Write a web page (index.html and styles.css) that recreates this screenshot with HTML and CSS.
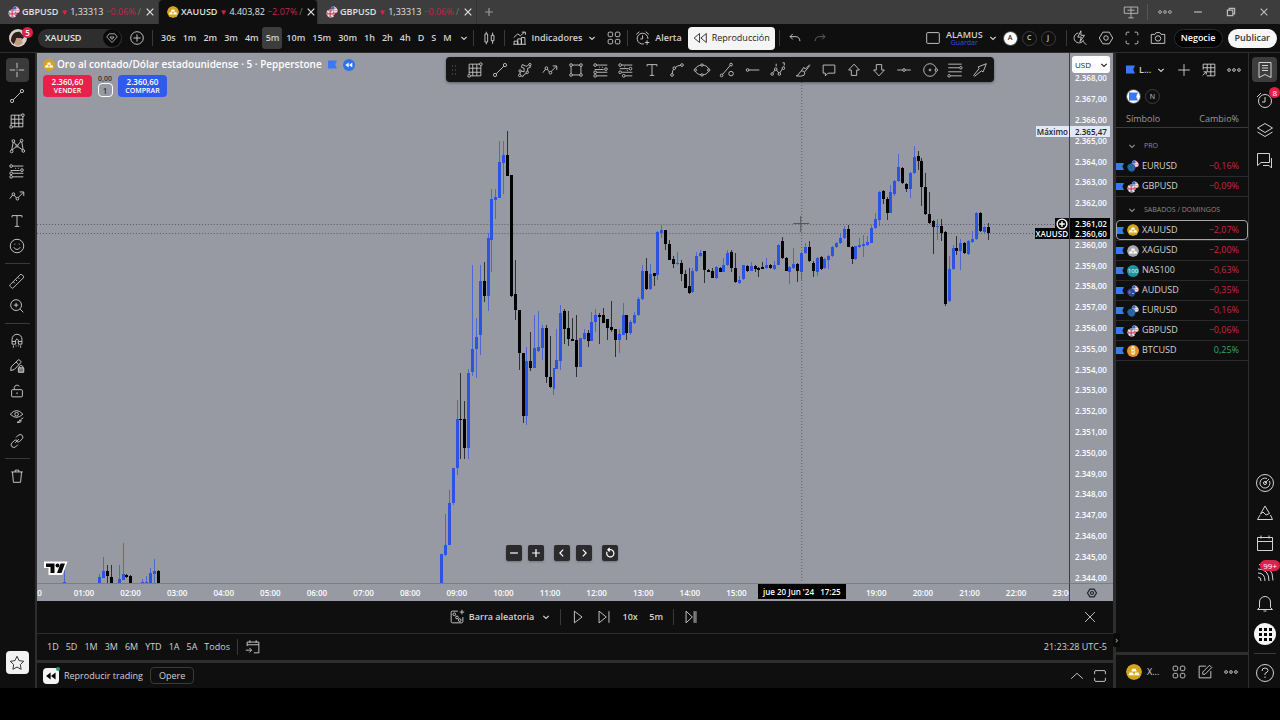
FILE: index.html
```html
<!DOCTYPE html>
<html lang="es">
<head>
<meta charset="utf-8">
<meta name="viewport" content="width=device-width, initial-scale=1">
<title>XAUUSD 4.403,82 −2.07%</title>
<link rel="stylesheet" href="styles.css">
</head>
<body>
<svg class="defs" aria-hidden="true">
  <symbol id="cross" viewBox="0 0 20 20"><path d="M10 2v6M10 12v6M2 10h6M12 10h6M10 9.500v1"/></symbol>
  <symbol id="line" viewBox="0 0 20 20"><circle cx="4.500" cy="15.500" r="1.800"/><circle cx="15.500" cy="4.500" r="1.800"/><path d="M5.800 14.200 14.200 5.800"/></symbol>
  <symbol id="gann" viewBox="0 0 20 20"><path d="M3.500 3.500h13v13h-13zM3.500 8h13M3.500 12.500h13M7.500 3.500v13M12 3.500v13"/><circle class="dot" cx="3.500" cy="16.500" r="1.500"/><circle class="dot" cx="16.500" cy="3.500" r="1.500"/></symbol>
  <symbol id="xabcd" viewBox="0 0 20 20"><path d="M4 15 6 5l4 5 5-6 2 11-7-5-6 5"/><circle class="dot" cx="4" cy="16" r="1.500"/><circle class="dot" cx="6" cy="4.500" r="1.500"/><circle class="dot" cx="15" cy="4" r="1.500"/><circle class="dot" cx="17" cy="15.500" r="1.500"/><circle class="dot" cx="10" cy="10" r="1.200"/></symbol>
  <symbol id="fib" viewBox="0 0 20 20"><path d="M5 4.500h12M3 9.500h10M5 12.500h12M5 16.500h12M8 7l1 0M11 7l1 0"/><circle class="dot" cx="3.500" cy="4.500" r="1.500"/><circle class="dot" cx="15.500" cy="9" r="1.500"/><circle class="dot" cx="3.500" cy="12.500" r="1.500"/><circle class="dot" cx="3.500" cy="16.500" r="1.500"/></symbol>
  <symbol id="fib2" viewBox="0 0 20 20"><path d="M5 4.500h12M3 8.500h10M5 12.500h12M9 16.500h8M8 6.500h1M11 10.500h1"/><circle class="dot" cx="3.500" cy="4.500" r="1.500"/><circle class="dot" cx="15" cy="8.500" r="1.500"/><circle class="dot" cx="3.500" cy="12.500" r="1.500"/><circle class="dot" cx="7.500" cy="16.500" r="1.500"/></symbol>
  <symbol id="wave" viewBox="0 0 20 20"><path d="m2 13 4-5 4 5 7-7M13 5.500h4.500V10"/><circle class="dot" cx="6" cy="8" r="1.500"/><circle class="dot" cx="10.500" cy="13" r="1.500"/></symbol>
  <symbol id="text" viewBox="0 0 20 20"><path d="M4.500 6V4h11v2M10 4v12M7.500 16h5"/></symbol>
  <symbol id="smile" viewBox="0 0 20 20"><circle cx="10" cy="10" r="7.500"/><path d="M7.500 7.500v1M12.500 7.500v1M6.500 11.500c1.500 3 5.500 3 7 0"/></symbol>
  <symbol id="ruler" viewBox="0 0 20 20"><path d="m2.500 14 11-11q1-1 2 0l1.500 1.500q1 1 0 2L6 17.500q-1 1-2 0L2.500 16q-1-1 0-2zM6 11l1.500 1.500M8.500 8.500 10 10M11 6l1.500 1.500"/></symbol>
  <symbol id="zoom" viewBox="0 0 20 20"><circle cx="9" cy="9" r="6"/><path d="M13.500 13.500l3.500 3.500M9 6.500v5M6.500 9h5"/></symbol>
  <symbol id="magnet" viewBox="0 0 20 20"><path d="M4.500 13.500V8a5.500 5.500 0 0 1 11 0v5.500h-4V9q-1.500-3-3 0v4.500zM4.500 10.500h4M11.500 10.500h4M6 15v2.500M9 15v1M11.500 15v1M14 15v2.500"/></symbol>
  <symbol id="penlock" viewBox="0 0 20 20"><path d="m3 15 .5-4L11 3.500q1-1 2 0l1 1q1 1 0 2L7 14zM9 5.500l3 3"/><path class="fill" d="M11.500 12h6v5h-6z"/><path d="M12.500 12v-1.500q2-2.500 4 0V12"/></symbol>
  <symbol id="lock" viewBox="0 0 20 20"><rect x="4" y="8.500" width="12" height="8" rx="1"/><path d="M7 8.500V6q1.500-4 5.500-1.500M10 11.500v2"/></symbol>
  <symbol id="eye" viewBox="0 0 20 20"><path d="M2.500 8q7-8 14 0-7 7-14 0z"/><circle cx="9.500" cy="8" r="2"/><path d="M10 17q3 0 3-2.500l2 1Q14 18 10 17zM14 14l3-2"/></symbol>
  <symbol id="link" viewBox="0 0 20 20"><path d="m9 6 2.500-2.500q2-1.500 4 0 2 2 .5 4L13 10.500q-2 1.500-3.500 0M11 14l-2.500 2.500q-2 1.500-4 0-2-2-.5-4L7 9.500q2-1.500 3.500 0M8 12l4-4"/></symbol>
  <symbol id="trash" viewBox="0 0 20 20"><path d="M3.500 5.500h13M5 5.500 6 17h8l1-11.500M8 5.500V3.500h4v2"/></symbol>
  <symbol id="star" viewBox="0 0 20 20"><path d="m10 2.500 2.300 4.900 5.200.7-3.800 3.700.9 5.200L10 14.500 5.400 17l.9-5.200L2.500 8.100l5.200-.7z"/></symbol>
  <symbol id="plus" viewBox="0 0 20 20"><path d="M10 3.500v13M3.500 10h13"/></symbol>
  <symbol id="x" viewBox="0 0 20 20"><path d="m4.500 4.500 11 11M15.500 4.500l-11 11"/></symbol>
  <symbol id="down" viewBox="0 0 20 20"><path d="m5.500 8 4.500 4.500L14.500 8"/></symbol>
  <symbol id="up" viewBox="0 0 20 20"><path d="m3.500 13 6.500-6 6.500 6"/></symbol>
  <symbol id="left" viewBox="0 0 20 20"><path d="m12 4.500-5.500 5.500 5.500 5.500"/></symbol>
  <symbol id="right" viewBox="0 0 20 20"><path d="m8 4.500 5.500 5.500L8 15.500"/></symbol>
  <symbol id="minus" viewBox="0 0 20 20"><path d="M3.500 10h13"/></symbol>
  <symbol id="reload" viewBox="0 0 20 20"><path d="M5 8a6 6 0 1 0 6-3.500H6.500M9.500 1.500l-3 3 3 3"/></symbol>
  <symbol id="pluscircle" viewBox="0 0 20 20"><circle cx="10" cy="10" r="7"/><path d="M10 6v8M6 10h8"/></symbol>
  <symbol id="gem" viewBox="0 0 20 20"><path d="M6 4h8l3.500 4.500L10 16.500 2.500 8.500zM7 8.500h6l-3 3.500z"/></symbol>
  <symbol id="candles" viewBox="0 0 20 20"><path d="M5.500 5.500h3v9h-3zM7 3v2.500M7 14.500V17M12.500 7h3v6h-3zM14 4v3M14 13v3.500"/></symbol>
  <symbol id="indic" viewBox="0 0 20 20"><path d="M3.500 17v-3.500h4V17M7.500 17v-6h4v6M11.500 17V9.500h4V17M2.500 17h14M3 9.500l4.500-4 3 2L15 3.500M12 3.500h4v3"/></symbol>
  <symbol id="four" viewBox="0 0 20 20"><rect x="3.500" y="3.500" width="5" height="5" rx="1.500"/><rect x="11.500" y="3.500" width="5" height="5" rx="1.500"/><rect x="3.500" y="11.500" width="5" height="5" rx="1.500"/><rect x="11.500" y="11.500" width="5" height="5" rx="1.500"/></symbol>
  <symbol id="alarm" viewBox="0 0 20 20"><path d="M11 16.500A6 6 0 1 1 15.500 11M9.500 7v4H7M2.500 6 6 3M13 3l3.500 3M14.500 12.500v5M12 15h5"/></symbol>
  <symbol id="rewind" viewBox="0 0 20 20"><path d="m9.500 5-6 5 6 5zM17 5l-6 5 6 5z"/></symbol>
  <symbol id="undo" viewBox="0 0 20 20"><path d="M7.500 5.500 4.500 8.500l3 3M4.500 8.500h6.500q4 0 4.500 5"/></symbol>
  <symbol id="redo" viewBox="0 0 20 20"><path d="M12.500 5.500 15.500 8.500l-3 3M15.500 8.500H9q-4 0-4.500 5"/></symbol>
  <symbol id="box" viewBox="0 0 20 20"><rect x="3" y="4" width="14" height="12" rx="1"/></symbol>
  <symbol id="flash" viewBox="0 0 20 20"><path d="M8 4.500A5.500 5.500 0 1 0 14 12M13 13.500l4 4M11 2 7.500 9h4L10 14l5-7h-4z"/></symbol>
  <symbol id="hex" viewBox="0 0 20 20"><path d="M6.500 3.500h7l4 6.500-4 6.500h-7L2.500 10z"/><circle cx="10" cy="10" r="2.500"/></symbol>
  <symbol id="full" viewBox="0 0 20 20"><path d="M3.500 7V5q0-1.500 1.500-1.500h2M13 3.500h2q1.500 0 1.500 1.500v2M16.500 13v2q0 1.500-1.500 1.500h-2M7 16.500H5q-1.500 0-1.500-1.500v-2"/></symbol>
  <symbol id="frame" viewBox="0 0 20 20"><path d="M4 8V5.500Q4 4 5.500 4h9Q16 4 16 5.500V8M16 12v2.500q0 1.500-1.500 1.500h-9Q4 16 4 14.500V12"/></symbol>
  <symbol id="camera" viewBox="0 0 20 20"><path d="M2.500 6h4L8 4h4l1.500 2h4v10h-15z"/><circle cx="10" cy="10.500" r="3"/></symbol>
  <symbol id="path" viewBox="0 0 20 20"><path d="M4 16.500 5 11l4 1V8l-3-1 1-3 5 2 3-3 1 4-3 1v5l-4 2-1 2z"/><circle class="dot" cx="4" cy="16" r="1.300"/><circle class="dot" cx="15.500" cy="4" r="1.300"/><circle class="dot" cx="4.500" cy="11" r="1.300"/><circle class="dot" cx="12.500" cy="12.500" r="1.300"/></symbol>
  <symbol id="rect" viewBox="0 0 20 20"><path d="M4.500 4.500h11v11h-11z"/><circle class="dot" cx="4.500" cy="4.500" r="1.500"/><circle class="dot" cx="15.500" cy="4.500" r="1.500"/><circle class="dot" cx="4.500" cy="15.500" r="1.500"/><circle class="dot" cx="15.500" cy="15.500" r="1.500"/></symbol>
  <symbol id="curve" viewBox="0 0 20 20"><path d="M4.500 15.500q0-10 11-11"/><circle class="dot" cx="4.500" cy="15.500" r="1.500"/><circle class="dot" cx="7" cy="8" r="1.500"/><circle class="dot" cx="15.500" cy="4.500" r="1.500"/></symbol>
  <symbol id="ellipse" viewBox="0 0 20 20"><ellipse cx="10" cy="10" rx="7.500" ry="5.500"/><circle class="dot" cx="10" cy="4.500" r="1.300"/><circle class="dot" cx="10" cy="15.500" r="1.300"/><circle class="dot" cx="2.500" cy="10" r="1.300"/><circle class="dot" cx="17.500" cy="10" r="1.300"/></symbol>
  <symbol id="lineset" viewBox="0 0 20 20"><circle cx="4" cy="16" r="1.500"/><circle cx="14.500" cy="4" r="1.500"/><path d="m5 15 8.500-10"/><circle cx="14.500" cy="14" r="2.500"/></symbol>
  <symbol id="ray" viewBox="0 0 20 20"><circle cx="4" cy="10" r="1.500"/><path d="M5.500 10H17"/></symbol>
  <symbol id="elliott" viewBox="0 0 20 20"><path d="m3.500 14 4-5 4 5 5-8M8 3v3M15 2h2v3"/><circle class="dot" cx="3.500" cy="14.500" r="1.400"/><circle class="dot" cx="7.500" cy="9" r="1.400"/><circle class="dot" cx="11.500" cy="14.500" r="1.400"/><circle class="dot" cx="16" cy="8" r="1.400"/></symbol>
  <symbol id="brush" viewBox="0 0 20 20"><path d="M2.500 16.500q3-1 4-4 2-2.500 4.500-1 2 2 0 4.500-3.500 1.500-8.500.5zM8 11l3-4 1.500 2L17.500 4M12 12l5.500-7"/></symbol>
  <symbol id="comment" viewBox="0 0 20 20"><path d="M3.500 4.500h13v9H9l-3 3v-3H3.500z"/></symbol>
  <symbol id="arrowup" viewBox="0 0 20 20"><path d="m10 3.500 6 6.500h-3v6H7v-6H4z"/></symbol>
  <symbol id="arrowdown" viewBox="0 0 20 20"><path d="m10 16.500 6-6.500h-3V4H7v6H4z"/></symbol>
  <symbol id="hline" viewBox="0 0 20 20"><path d="M2.500 10h6M11.500 10h6"/><circle cx="10" cy="10" r="1.500"/></symbol>
  <symbol id="circle" viewBox="0 0 20 20"><circle cx="10" cy="10" r="7"/><circle cx="10" cy="10" r="1"/><circle class="dot" cx="17" cy="10" r="1.400"/></symbol>
  <symbol id="levels" viewBox="0 0 20 20"><path d="M2.500 3.500h15M2.500 7.500H15M2.500 12h15M5 16.500h12.500"/><circle class="dot" cx="16.500" cy="7.500" r="1.400"/><circle class="dot" cx="3.500" cy="16.500" r="1.400"/></symbol>
  <symbol id="pointer" viewBox="0 0 20 20"><path d="m17 3-3.500 9-2-1-7.500 6-1-1 6-7.500-1-2z"/></symbol>
  <symbol id="monitor" viewBox="0 0 20 20"><path d="M2.500 4.500h15v7h-15zM10 4.500v12M7 16.500h6M6 8h8"/></symbol>
  <symbol id="dots" viewBox="0 0 20 20"><circle cx="4.500" cy="10" r="1.500"/><circle cx="10" cy="10" r="1.500"/><circle cx="15.500" cy="10" r="1.500"/></symbol>
  <symbol id="restore" viewBox="0 0 20 20"><path d="M4 7h9v9H4zM7 7V4h9v9h-3"/></symbol>
  <symbol id="sheet" viewBox="0 0 20 20"><path d="M7.500 16.500h9v-13h-13v6M3.500 7.500h13M8 12h8.500M8 3.500V12M12 3.500v13M3 16l4-4M4 12h3v3"/></symbol>
  <symbol id="list" viewBox="0 0 20 20"><path d="M4 2.500h12v15L10 14.500l-6 3zM7 5.500h6M7 8h6M7 10.500h6"/></symbol>
  <symbol id="clock" viewBox="0 0 20 20"><circle cx="10" cy="11" r="6.500"/><path d="M10 7v5H7M2 7l4-4"/></symbol>
  <symbol id="layers" viewBox="0 0 20 20"><path d="m10 3.500 7.500 4.500L10 12.500 2.500 8zM2.500 12l7.500 4.500 7.500-4.500"/></symbol>
  <symbol id="chat" viewBox="0 0 20 20"><path d="M2.500 3.500h12v9H6l-3.500 3zM16.500 8v10L14 15.500H8"/></symbol>
  <symbol id="target" viewBox="0 0 20 20"><circle cx="10" cy="10" r="8.500"/><path d="M14.500 8a5 5 0 1 1-2.500-2.500M10 10l4-4"/><circle cx="10" cy="10" r="1.500"/></symbol>
  <symbol id="pyramid" viewBox="0 0 20 20"><path d="M10 3 5.500 11 8 9l3 3 3.500-1.500zM5 12l-2.500 4.500h15L15.500 12"/></symbol>
  <symbol id="calendar" viewBox="0 0 20 20"><path d="M2.500 4.500h15v13h-15zM2.500 8.500h15M6 2.500v3M14 2.500v3"/></symbol>
  <symbol id="goto" viewBox="0 0 20 20"><path d="M3.500 9V4.500h13v12H11M3.500 7.500h13M6.500 2.500v3M13.500 2.500v3M2 13.500h6M6 11l2.500 2.500L6 16"/></symbol>
  <symbol id="feed" viewBox="0 0 20 20"><path d="M3 6q11 0 11 12M3 10q7 0 7 8M3 14q3 0 3 4M4 1.500q14 1 14 16"/></symbol>
  <symbol id="bell" viewBox="0 0 20 20"><path d="M4.500 14.500V9a5.500 5.500 0 0 1 11 0v5.500l2 2h-15zM8.500 18h3"/></symbol>
  <symbol id="help" viewBox="0 0 20 20"><circle cx="10" cy="10" r="8.500"/><path d="M7 8q0-3 3-3t3 2.500q0 1.500-3 3V12M10 13.500V15"/></symbol>
  <symbol id="edit" viewBox="0 0 20 20"><path d="M11 3.500H3.500v13h13V9M7.500 12.500V10l7.500-7.500L17.500 5 10 12.500z"/></symbol>
  <symbol id="random" viewBox="0 0 20 20"><path d="M11 3.500H5Q3.500 3.500 3.500 5v10q0 1.500 1.500 1.500h10q1.500 0 1.500-1.500V10M15.500 2v5M13 4.500h5"/><circle cx="7" cy="7" r="1.500"/><circle cx="10" cy="10.500" r="1.500"/><circle cx="13" cy="13.500" r="1.500"/></symbol>
  <symbol id="play" viewBox="0 0 20 20"><path d="m6 3.500 8.500 6.500L6 16.500z"/></symbol>
  <symbol id="step" viewBox="0 0 20 20"><path d="m4.500 3.500 8 6.500-8 6.500zM15.500 3.500v13"/></symbol>
  <symbol id="skip" viewBox="0 0 20 20"><path d="m4.500 3.500 7 6.500-7 6.500zM13.500 3.500v13M15.500 3.500v13"/></symbol>
  <symbol id="flag" viewBox="0 0 20 20"><path class="blue" d="M0 1h20l-4 9 4 9H0z"/></symbol>
  <symbol id="gold" viewBox="0 0 20 20"><circle class="gold" cx="10" cy="10" r="10"/><path class="white" d="M8 6h4l1.500 3.500h-7zM4.500 10.500h4L10 14H3zM11.500 10.500h4L17 14h-7z"/></symbol>
  <symbol id="silver" viewBox="0 0 20 20"><circle class="silver" cx="10" cy="10" r="10"/><path class="white" d="M8 6h4l1.500 3.500h-7zM4.500 10.500h4L10 14H3zM11.500 10.500h4L17 14h-7z"/></symbol>
  <symbol id="eur" viewBox="0 0 20 20"><circle class="us" cx="14" cy="6" r="6"/><path class="stripes" d="M9 7.500h10.500M10 10.500h9M14 4h5.500"/><path class="navy" d="M8.500 3.500A6 6 0 0 1 14 0v6H8z"/><circle class="eu" cx="7" cy="13" r="7"/><circle class="stars" cx="7" cy="13" r="3.500"/></symbol>
  <symbol id="gbp" viewBox="0 0 20 20"><circle class="us" cx="14" cy="6" r="6"/><path class="stripes" d="M9 7.500h10.500M10 10.500h9M14 4h5.500"/><path class="navy" d="M8.500 3.500A6 6 0 0 1 14 0v6H8z"/><circle class="uk" cx="7" cy="13" r="7"/><path class="ukwhite" d="M7 6v14M0 13h14M2 8l10 10M12 8 2 18"/><path class="ukred" d="M7 6v14M0 13h14"/></symbol>
  <symbol id="aud" viewBox="0 0 20 20"><circle class="us" cx="14" cy="6" r="6"/><path class="stripes" d="M9 7.500h10.500M10 10.500h9M14 4h5.500"/><path class="navy" d="M8.500 3.500A6 6 0 0 1 14 0v6H8z"/><circle class="au" cx="7" cy="13" r="7"/><path class="stripes" d="M2 12h5M4.500 9v6"/><circle class="white" cx="10" cy="14" r="1"/></symbol>
</svg>

<div class="app">
  <header class="tabs">
    <div class="tab"><svg class="coin"><use href="#gbp"/></svg><b>GBPUSD</b><i>▼</i><span>1,33313</span><em>−0.06%</em><small>/</small><button aria-label="Cerrar"><svg class="ic s"><use href="#x"/></svg></button></div>
    <div class="tab on"><svg class="coin"><use href="#gold"/></svg><b>XAUUSD</b><i>▼</i><span>4.403,82</span><em>−2.07%</em><small>/</small><button aria-label="Cerrar"><svg class="ic s"><use href="#x"/></svg></button></div>
    <div class="tab"><svg class="coin"><use href="#gbp"/></svg><b>GBPUSD</b><i>▼</i><span>1,33313</span><em>−0.06%</em><small>/</small><button aria-label="Cerrar"><svg class="ic s"><use href="#x"/></svg></button></div>
    <button class="newtab" aria-label="Nueva pestaña"><svg class="ic s"><use href="#plus"/></svg></button>
    <div class="win"><button aria-label="Pantallas"><svg class="ic"><use href="#monitor"/></svg></button><hr><button aria-label="Más"><svg class="ic"><use href="#dots"/></svg></button><button aria-label="Minimizar"><svg class="ic s"><use href="#minus"/></svg></button><button aria-label="Restaurar"><svg class="ic s"><use href="#restore"/></svg></button><button aria-label="Cerrar ventana"><svg class="ic s"><use href="#x"/></svg></button></div>
  </header>

  <nav class="top">
    <button class="avatar" aria-label="Perfil"><svg viewBox="0 0 20 20"><circle cx="10" cy="10" r="10" fill="#d9cfca"/><path d="M2 13Q3 2 12 3l5 6-3 3-4-2-5 7z" fill="#30201c"/><path d="m8 10 6 0 1 6-5 3-4-2z" fill="#c39b84"/></svg><span>5</span></button>
    <button class="symbol"><span>XAUUSD</span><svg class="ic"><use href="#gem"/></svg></button>
    <button class="w30" aria-label="Comparar"><svg class="ic"><use href="#pluscircle"/></svg></button>
    <hr>
    <div class="frames"><button>30s</button><button>1m</button><button>2m</button><button>3m</button><button>4m</button><button class="on">5m</button><button>10m</button><button>15m</button><button>30m</button><button>1h</button><button>2h</button><button>4h</button><button>D</button><button>S</button><button>M</button></div>
    <button class="w18" aria-label="Intervalos"><svg class="ic s"><use href="#down"/></svg></button>
    <hr>
    <button class="w30" aria-label="Velas"><svg class="ic"><use href="#candles"/></svg></button>
    <hr>
    <button class="indicators"><svg class="ic"><use href="#indic"/></svg>Indicadores</button>
    <button class="w18" aria-label="Favoritos"><svg class="ic s"><use href="#down"/></svg></button>
    <button class="w26" aria-label="Plantillas"><svg class="ic"><use href="#four"/></svg></button>
    <hr>
    <button class="alert"><svg class="ic"><use href="#alarm"/></svg>Alerta</button>
    <button class="replay"><svg class="ic"><use href="#rewind"/></svg>Reproducción</button>
    <hr>
    <button class="w30" aria-label="Deshacer"><svg class="ic"><use href="#undo"/></svg></button>
    <button class="w20 dim" aria-label="Rehacer"><svg class="ic"><use href="#redo"/></svg></button>
    <div class="topright">
      <button class="w26" aria-label="Diseño"><svg class="ic"><use href="#box"/></svg></button>
      <button class="layout">ALAMUS<span>Guardar</span></button>
      <button class="w20" aria-label="Diseños"><svg class="ic s"><use href="#down"/></svg></button>
      <div class="circles"><button class="on">A</button><button>C</button><button>J</button></div>
      <hr>
      <div class="tools"><button aria-label="Búsqueda rápida"><svg class="ic"><use href="#flash"/></svg></button><button aria-label="Ajustes"><svg class="ic"><use href="#hex"/></svg></button><button aria-label="Pantalla completa"><svg class="ic"><use href="#full"/></svg></button><button aria-label="Captura"><svg class="ic"><use href="#camera"/></svg></button></div>
      <button class="pill dark">Negocie</button>
      <button class="pill">Publicar</button>
    </div>
  </nav>

  <div class="body">
    <aside class="draw">
      <button class="on" aria-label="Cursor"><svg class="ic"><use href="#cross"/></svg></button>
      <button aria-label="Línea"><svg class="ic"><use href="#line"/></svg></button>
      <button aria-label="Gann"><svg class="ic"><use href="#gann"/></svg></button>
      <button aria-label="Patrones"><svg class="ic"><use href="#xabcd"/></svg></button>
      <button aria-label="Fibonacci"><svg class="ic"><use href="#fib"/></svg></button>
      <button aria-label="Previsión"><svg class="ic"><use href="#wave"/></svg></button>
      <button aria-label="Texto"><svg class="ic"><use href="#text"/></svg></button>
      <button aria-label="Iconos"><svg class="ic"><use href="#smile"/></svg></button>
      <hr>
      <button aria-label="Medir"><svg class="ic"><use href="#ruler"/></svg></button>
      <button aria-label="Acercar"><svg class="ic"><use href="#zoom"/></svg></button>
      <hr>
      <button aria-label="Imán"><svg class="ic"><use href="#magnet"/></svg></button>
      <button aria-label="Modo dibujo"><svg class="ic"><use href="#penlock"/></svg></button>
      <button aria-label="Bloquear"><svg class="ic"><use href="#lock"/></svg></button>
      <button aria-label="Ocultar"><svg class="ic"><use href="#eye"/></svg></button>
      <button aria-label="Vincular"><svg class="ic"><use href="#link"/></svg></button>
      <hr>
      <button aria-label="Eliminar"><svg class="ic"><use href="#trash"/></svg></button>
      <button class="fav" aria-label="Barra de favoritos"><svg class="ic"><use href="#star"/></svg></button>
    </aside>

    <main class="center">
      <section class="chart">
        <div class="plot">
          <svg id="candles-layer" viewBox="37 53 1033 530" preserveAspectRatio="none" shape-rendering="crispEdges"></svg>
          <div class="legend">
            <h1><svg class="coin"><use href="#gold"/></svg>Oro al contado/Dólar estadounidense · 5 · Pepperstone<svg class="flag"><use href="#flag"/></svg><svg class="rw" viewBox="0 0 20 20"><circle cx="10" cy="10" r="10"/><path d="M9.500 6v8L4 10zM15.500 6v8L10 10z"/></svg></h1>
            <div class="trade"><button class="sell">2.360,60<span>VENDER</span></button><div class="qty"><span>0,00</span><button>1</button></div><button class="buy">2.360,60<span>COMPRAR</span></button></div>
          </div>
          <svg class="brand" viewBox="0 0 26 16"><path d="M1 1.500h23.500L19.500 15h-6L14.500 12V15H5.500V8H1z"/><path class="ink" d="M3 3.500h8.500V13H7.500V7H3zM17.500 3.500h4.500L18.500 13H14z"/><circle class="ink" cx="14.500" cy="5.500" r="2"/></svg>
          <div class="zoomer"><button aria-label="Alejar"><svg class="ic"><use href="#minus"/></svg></button><button aria-label="Acercar"><svg class="ic"><use href="#plus"/></svg></button><button class="gap" aria-label="Izquierda"><svg class="ic"><use href="#left"/></svg></button><button aria-label="Derecha"><svg class="ic"><use href="#right"/></svg></button><button class="gap" aria-label="Restablecer"><svg class="ic"><use href="#reload"/></svg></button></div>
          <span class="tag max">Máximo</span><span class="tag last">XAUUSD</span>
          <button class="add" aria-label="Añadir alerta"><svg class="ic"><use href="#pluscircle"/></svg></button>
        </div>
        <div class="prices">
          <div id="price-list"></div>
          <div class="currency"><select aria-label="Moneda"><option>USD</option></select><svg class="ic s"><use href="#down"/></svg></div>
          <span class="ptag max">2.365,47</span><span class="ptag last">2.360,60</span><span class="ptag cur">2.361,02</span>
        </div>
        <div class="times"><div id="time-list"></div><span class="ttag">jue 20 Jun '24 &nbsp; 17:25</span></div>
        <button class="axisset" aria-label="Ajustes de escala"><svg class="ic s"><use href="#hex"/></svg></button>
        <div class="favbar"><svg class="grip" viewBox="0 0 6 10"><path d="M1 1h1M4 1h1M1 5h1M4 5h1M1 9h1M4 9h1"/></svg>
          <button aria-label="Gann"><svg class="ic"><use href="#gann"/></svg></button><button aria-label="Línea"><svg class="ic"><use href="#line"/></svg></button><button aria-label="Trazado"><svg class="ic"><use href="#path"/></svg></button><button aria-label="Onda"><svg class="ic"><use href="#wave"/></svg></button><button aria-label="Rectángulo"><svg class="ic"><use href="#rect"/></svg></button><button aria-label="Posición larga"><svg class="ic"><use href="#fib"/></svg></button><button aria-label="Posición corta"><svg class="ic"><use href="#fib2"/></svg></button><button aria-label="Texto"><svg class="ic"><use href="#text"/></svg></button><button aria-label="Curva"><svg class="ic"><use href="#curve"/></svg></button><button aria-label="Elipse"><svg class="ic"><use href="#ellipse"/></svg></button><button aria-label="Línea informativa"><svg class="ic"><use href="#lineset"/></svg></button><button aria-label="Rayo"><svg class="ic"><use href="#ray"/></svg></button><button aria-label="Elliott"><svg class="ic"><use href="#elliott"/></svg></button><button aria-label="Pincel"><svg class="ic"><use href="#brush"/></svg></button><button aria-label="Comentario"><svg class="ic"><use href="#comment"/></svg></button><button aria-label="Flecha arriba"><svg class="ic"><use href="#arrowup"/></svg></button><button aria-label="Flecha abajo"><svg class="ic"><use href="#arrowdown"/></svg></button><button aria-label="Línea horizontal"><svg class="ic"><use href="#hline"/></svg></button><button aria-label="Círculo"><svg class="ic"><use href="#circle"/></svg></button><button aria-label="Retroceso"><svg class="ic"><use href="#levels"/></svg></button><button aria-label="Flecha"><svg class="ic"><use href="#pointer"/></svg></button>
        </div>
      </section>
      <section class="replaybar">
        <button class="bar"><svg class="ic"><use href="#random"/></svg>Barra aleatoria</button><button class="w20" aria-label="Opciones"><svg class="ic s"><use href="#down"/></svg></button><hr>
        <button class="w26" aria-label="Reproducir"><svg class="ic"><use href="#play"/></svg></button><button class="w26" aria-label="Adelante"><svg class="ic"><use href="#step"/></svg></button><button class="w26">10x</button><button class="w26">5m</button><hr><button class="w26" aria-label="Ir al final"><svg class="ic"><use href="#skip"/></svg></button>
        <button class="close" aria-label="Cerrar"><svg class="ic"><use href="#x"/></svg></button>
      </section>
      <section class="ranges">
        <button>1D</button><button>5D</button><button>1M</button><button>3M</button><button>6M</button><button>YTD</button><button>1A</button><button>5A</button><button>Todos</button><hr><button class="w26" aria-label="Ir a"><svg class="ic"><use href="#goto"/></svg></button><time>21:23:28 UTC-5</time>
      </section>
      <section class="trading">
        <button class="rew" aria-label="Rebobinar"><svg viewBox="0 0 20 20"><path d="M9.500 5v10L3 10zM16.500 5v10L10 10z"/></svg></button><span>Reproducir trading</span><button class="opere">Opere</button>
        <div class="right"><button aria-label="Expandir"><svg class="ic"><use href="#up"/></svg></button><button aria-label="Maximizar"><svg class="ic"><use href="#frame"/></svg></button></div>
      </section>
    </main>

    <aside class="watch">
      <div class="list">
        <div class="whead"><svg class="flag"><use href="#flag"/></svg><button class="lname">L...</button><svg class="ic s"><use href="#down"/></svg><div class="acts"><button aria-label="Añadir"><svg class="ic"><use href="#plus"/></svg></button><button aria-label="Tabla"><svg class="ic"><use href="#sheet"/></svg></button><button aria-label="Más"><svg class="ic"><use href="#dots"/></svg></button></div></div>
        <div class="chips"><button class="on" aria-label="Lista azul"><svg class="flag"><use href="#flag"/></svg></button><button>N</button></div>
        <table>
          <thead><tr><th>Símbolo</th><th>Cambio%</th></tr></thead>
          <tbody>
            <tr class="sec"><td colspan="2"><svg class="ic s"><use href="#down"/></svg>PRO</td></tr>
            <tr><td><svg class="flag"><use href="#flag"/></svg><svg class="coin"><use href="#eur"/></svg>EURUSD</td><td>−0,16%</td></tr>
            <tr><td><svg class="flag"><use href="#flag"/></svg><svg class="coin"><use href="#gbp"/></svg>GBPUSD</td><td>−0,09%</td></tr>
            <tr class="sec two"><td colspan="2"><svg class="ic s"><use href="#down"/></svg>SABADOS / DOMINGOS</td></tr>
            <tr class="on"><td><svg class="flag"><use href="#flag"/></svg><svg class="coin"><use href="#gold"/></svg>XAUUSD</td><td>−2,07%</td></tr>
            <tr><td><svg class="flag"><use href="#flag"/></svg><svg class="coin"><use href="#silver"/></svg>XAGUSD</td><td>−2,00%</td></tr>
            <tr><td><svg class="flag"><use href="#flag"/></svg><span class="coin nas">100</span>NAS100</td><td>−0,63%</td></tr>
            <tr><td><svg class="flag"><use href="#flag"/></svg><svg class="coin"><use href="#aud"/></svg>AUDUSD</td><td>−0,35%</td></tr>
            <tr><td><svg class="flag"><use href="#flag"/></svg><svg class="coin"><use href="#eur"/></svg>EURUSD</td><td>−0,16%</td></tr>
            <tr><td><svg class="flag"><use href="#flag"/></svg><svg class="coin"><use href="#gbp"/></svg>GBPUSD</td><td>−0,06%</td></tr>
            <tr><td><svg class="flag"><use href="#flag"/></svg><span class="coin btc">₿</span>BTCUSD</td><td class="pos">0,25%</td></tr>
          </tbody>
        </table>
        <button class="handle" aria-label="Contraer">›</button>
      </div>
      <div class="detail"><svg class="coin"><use href="#gold"/></svg><span>X...</span><div class="acts"><button aria-label="Vista"><svg class="ic"><use href="#four"/></svg></button><button aria-label="Editar"><svg class="ic"><use href="#edit"/></svg></button><button aria-label="Más"><svg class="ic"><use href="#dots"/></svg></button></div></div>
    </aside>

    <aside class="rail">
      <button class="on" aria-label="Lista"><svg class="ic l"><use href="#list"/></svg></button>
      <button aria-label="Alertas"><svg class="ic l"><use href="#clock"/></svg><span>8</span></button>
      <button aria-label="Capas"><svg class="ic l"><use href="#layers"/></svg></button>
      <button aria-label="Chats"><svg class="ic l"><use href="#chat"/></svg></button>
      <button class="push" aria-label="Analizadores"><svg class="ic l"><use href="#target"/></svg></button>
      <button aria-label="Pine"><svg class="ic l"><use href="#pyramid"/></svg></button>
      <button aria-label="Calendario"><svg class="ic l"><use href="#calendar"/></svg></button>
      <button aria-label="Noticias"><svg class="ic l"><use href="#feed"/></svg><span>99+</span></button>
      <button aria-label="Notificaciones"><svg class="ic l"><use href="#bell"/></svg></button>
      <button class="apps" aria-label="Productos"><svg viewBox="0 0 22 22"><path d="M5 5h3v3H5zM10 5h3v3h-3zM15 5h3v3h-3zM5 10h3v3H5zM10 10h3v3h-3zM15 10h3v3h-3zM5 15h3v3H5zM10 15h3v3h-3zM15 15h3v3h-3z"/></svg></button>
      <hr>
      <button class="end" aria-label="Ayuda"><svg class="ic l"><use href="#help"/></svg></button>
    </aside>
  </div>
</div>
<script src="chart.js"></script>
</body>
</html>
```

FILE: styles.css
```css
:root { --bg: #0f0f0f; --line: #2e2e2e; --fg: #d2d2d2; --red: #e0204c; --chart: #989aa3; }
* { box-sizing: border-box; }
body { margin: 0; background: #000; color: var(--fg); font: 500 9px/12px "Trebuchet MS", "Open Sans", "Noto Sans", sans-serif; }
button { display: flex; align-items: center; justify-content: center; padding: 0; border: 0; background: none; color: inherit; font: inherit; white-space: nowrap; }
.defs { display: none; }
.app { display: flex; flex-direction: column; height: calc(100vh - 32px); min-height: 600px; background: var(--bg); overflow: hidden; }
.ic { width: 18px; height: 18px; flex: none; fill: none; stroke: currentColor; stroke-width: 1; }
.ic.s { width: 12px; height: 12px; stroke-width: 2; }
.ic.l { width: 20px; height: 20px; }
.dot { fill: var(--bg); }
.fill { fill: #777; }
.flag { width: 9px; height: 9px; flex: none; }
.coin { width: 12px; height: 12px; flex: none; border-radius: 50%; }
.blue { fill: #3b78f5; stroke: none; }
.gold { fill: #d2a51c; } .silver { fill: #a9a9ad; } .white { fill: #fff; }
.us { fill: #f0e8ee; } .navy { fill: #3964c0; } .stripes { stroke: #e56a7c; stroke-width: 1; fill: none; }
.eu { fill: #1f5fa8; } .stars { fill: none; stroke: #c5b65e; stroke-dasharray: 1 2; } .uk { fill: #6d6fa8; } .au { fill: #204c9c; }
.ukwhite { stroke: #f3dfe5; stroke-width: 3; fill: none; } .ukred { stroke: #d4405c; stroke-width: 2; fill: none; }
hr { width: 1px; height: 16px; margin: 0; border: 0; background: #3a3a3a; flex: none; }
.w18 { width: 18px; } .w20 { width: 20px; } .w26 { width: 26px; } .w30 { width: 30px; }

.tabs { display: flex; align-items: center; height: 24px; flex: none; background: #3d3d3d; }
.tab { display: flex; align-items: center; width: 159px; height: 24px; padding: 0 2px 0 8px; gap: 2px; border-right: 1px solid #333; color: #e0e0e0; }
.tab.on { background: var(--bg); border-radius: 4px 4px 0 0; }
.tab b { font-weight: 600; } .tab i { color: var(--red); font-style: normal; font-size: 8px; }
.tab em { color: #c7254c; font-style: normal; } .tab small { color: #777; font-size: 9px; }
.tab button { margin-left: auto; }
.newtab { width: 24px; color: #999; }
.win { display: flex; align-items: center; margin-left: auto; color: #bbb; }
.win button { width: 33px; }
.win hr { background: #555; }

.top { display: flex; align-items: center; height: 29px; flex: none; border-bottom: 1px solid var(--line); font-weight: 600; }
.avatar { position: relative; width: 20px; margin: 0 10px 0 8px; }
.avatar svg { width: 18px; height: 18px; }
.avatar span { position: absolute; top: -2px; right: -5px; width: 11px; height: 11px; border-radius: 6px; background: var(--red); color: #fff; font-size: 8px; line-height: 11px; }
.symbol { justify-content: space-between; width: 84px; height: 19px; padding: 0 1px 0 7px; border-radius: 10px; background: #2e2e2e; color: #e4e4e4; }
.symbol svg { border-radius: 50%; background: #0b0b0b; padding: 2px; }
.frames { display: flex; margin-left: 4px; }
.frames button { padding: 0 3px 0 4px; height: 22px; border-radius: 3px; }
.frames .on { background: #3d3d3d; }
.indicators { gap: 3px; padding: 0 1px 0 6px; }
.alert { gap: 3px; padding: 0 6px; }
.replay { gap: 3px; height: 23px; padding: 0 5px 0 3px; margin-right: 4px; border-radius: 4px; background: #f5f5f5; color: #222; font-weight: 500; }
.dim { color: #666; }
.topright { display: flex; align-items: center; margin-left: auto; }
.layout { flex-direction: column; line-height: 9px; }
.layout span { color: #2d55d8; font-size: 7px; line-height: 8px; font-weight: 500; }
.circles { display: flex; gap: 4px; padding-right: 10px; }
.circles button, .chips button { width: 15px; height: 15px; border: 1px solid #3c3c3c; border-radius: 50%; font-size: 7px; }
.circles .on { background: #fff; color: #222; }
.tools { display: flex; }
.tools button { width: 26px; }
.pill { height: 19px; padding: 0 7px; margin-right: 3px; border-radius: 10px; background: #f7f7f7; color: #333; }
.pill.dark { padding: 0 6px; background: #000; color: #fff; border: 1px solid #2b2b2b; margin: 0 5px 0 3px; }

.body { display: flex; flex: 1; min-height: 0; }
.draw { display: flex; flex-direction: column; align-items: center; width: 37px; flex: none; padding: 5px 1px 14px 0; border-right: 2px solid var(--line); }
.draw button { width: 23px; height: 25px; flex: none; }
.draw .on { height: 24px; margin-bottom: 1px; border-radius: 4px; background: #3a3a3a; }
.draw hr { width: 25px; height: 1px; margin: 5px 0 4px; }
.draw .fav { height: 23px; margin-top: auto; border-radius: 4px; background: #f2f2f2; color: #222; }

.center { display: flex; flex-direction: column; flex: 1; min-width: 0; }
.chart { position: relative; display: grid; grid-template: 1fr 18px / 1fr 43px; flex: 1; min-height: 0; background: var(--chart); color: #fff; font-size: 8px; font-weight: 600; overflow: hidden; }
.plot { position: relative; border-right: 1px solid #3c3d42; min-height: 0; }
#candles-layer { position: absolute; width: 100%; height: 100%; }
.up { fill: #2b54e4; } .dn { fill: #030303; } .cross { stroke: #585a62; stroke-dasharray: 1 2; }
.legend { position: absolute; top: 5px; left: 6px; }
.legend h1 { display: flex; align-items: center; gap: 2px; margin: 0; font-size: 10px; line-height: 13px; font-weight: 600; }
.legend .flag { margin: 0 4px; }
.legend .rw { width: 12px; height: 12px; fill: #2d72e8; }
.rw path { fill: #fff; }
.trade { display: flex; gap: 5px; margin-top: 4px; }
.sell, .buy { flex-direction: column; width: 49px; height: 22px; border-radius: 4px; background: #e6224a; font-size: 8px; line-height: 9px; }
.buy { background: #3059f0; }
.sell span, .buy span { font-size: 7px; line-height: 9px; }
.qty { display: flex; flex-direction: column; align-items: center; width: 16px; color: #333; font-size: 7px; line-height: 7px; }
.qty button { width: 15px; height: 14px; margin-top: 1px; border: 1px solid #fff; border-radius: 4px; font-size: 8px; }
.brand { position: absolute; left: 6px; bottom: 7px; width: 26px; height: 16px; fill: #fff; }
.ink { fill: #050505; }
.zoomer { position: absolute; left: 469px; bottom: 22px; display: flex; gap: 6px; }
.zoomer button { width: 16px; height: 16px; border-radius: 2px; background: #2b2b2d; box-shadow: 0 1px 2px #5558; }
.zoomer .gap { margin-left: 4px; }
.zoomer .ic { width: 12px; height: 12px; stroke-width: 2; }
.tag, .ptag, .ttag { position: absolute; height: 11px; line-height: 11px; padding: 0 1px; background: #000; color: #fff; white-space: nowrap; }
.tag { right: 0; } .ptag { left: 0; width: 40px; padding-left: 5px; }
.max { top: 73px; background: #dfe9f8; color: #222; }
.last { top: 175px; }
.cur { top: 165px; height: 12px; line-height: 12px; }
.add { position: absolute; right: 0; top: 165px; width: 14px; height: 12px; background: #0b0b0b; }
.add .ic { width: 14px; height: 14px; stroke-width: 2; }
.prices { position: relative; min-height: 0; overflow: hidden; }
#price-list { display: flex; flex-direction: column; position: absolute; top: 15px; bottom: -5px; padding-left: 5px; }
#price-list span { display: flex; align-items: center; flex: 1; }
.currency { position: absolute; top: 3px; left: 2px; width: 38px; height: 17px; color: #222; }
.currency select { width: 38px; height: 17px; padding: 0 3px; border: 0; border-radius: 3px; background: #fff; color: inherit; font: inherit; font-weight: 500; appearance: none; }
.currency .ic { position: absolute; right: 0; top: 3px; pointer-events: none; }
.times { position: relative; border-top: 1px solid #7b7d85; border-right: 1px solid #3c3d42; overflow: hidden; }
#time-list { display: flex; margin: 0 -17px 0 -23px; }
#time-list span { flex: 1; min-width: 0; line-height: 17px; text-align: center; }
.ttag { left: 721px; top: 0; height: 15px; line-height: 16px; padding: 0 5px; }
.axisset { border-top: 1px solid #7b7d85; color: #222; }
.favbar { position: absolute; left: 409px; top: 4px; display: flex; align-items: center; width: 548px; height: 25px; padding: 0 1px 0 5px; border-radius: 4px; background: #151515; color: #c8c8c8; box-shadow: 0 1px 3px #0006; }
.favbar button { flex: 1; }
.grip { width: 6px; height: 10px; margin-right: 5px; stroke: #666; }

.replaybar { display: flex; align-items: center; justify-content: center; height: 33px; flex: none; position: relative; padding-left: 2px; border-bottom: 1px solid var(--line); font-weight: 600; }
.replaybar .bar { gap: 3px; margin-right: 2px; }
.replaybar hr { margin: 0 4px; }
.close { position: absolute; right: 14px; }
.ranges { display: flex; align-items: center; height: 26px; flex: none; padding: 0 6px; }
.ranges button { padding: 0 3px 0 4px; }
.ranges hr { margin: 0 2px 0 4px; }
.ranges .w26 { padding: 0; }
.ranges time { margin-left: auto; }
.trading { display: flex; align-items: center; height: 28px; flex: none; padding: 0 4px 0 6px; gap: 5px; border-top: 3px solid var(--line); }
.rew { position: relative; width: 16px; height: 16px; border-radius: 4px; background: #f4f4f4; }
.rew svg { width: 14px; height: 14px; }
.rew::after { content: ""; position: absolute; top: -1px; right: -1px; width: 4px; height: 4px; border-radius: 50%; background: #2a9a75; }
.opere { height: 17px; padding: 0 8px; margin-left: 2px; border: 1px solid #3a3a3a; border-radius: 4px; }
.right { display: flex; gap: 5px; margin-left: auto; }

.watch { display: flex; flex-direction: column; width: 136px; flex: none; border-left: 3px solid var(--line); border-right: 1px solid var(--line); }
.list { position: relative; flex: 1; min-height: 0; }
.whead { display: flex; align-items: center; height: 33px; gap: 4px; padding: 0 8px 0 10px; }
.whead .lname { font-weight: 600; }
.acts { display: flex; margin-left: auto; }
.acts button { width: 25px; }
.chips { display: flex; gap: 4px; padding: 3px 10px 0; height: 26px; }
.chips .on { background: #fff; }
table { width: 100%; border-collapse: collapse; }
th { height: 15px; padding: 0 9px 1px 10px; border-bottom: 1px solid #3a3a3a; color: #9a9a9a; font-weight: 500; text-align: left; }
th + th, td + td { text-align: right; padding-right: 9px; }
td { height: 20px; padding: 0; border-bottom: 1px solid #2b2b2b; line-height: 18px; }
td .flag { width: 8px; margin-right: 3px; vertical-align: middle; }
td .coin { display: inline-block; margin-right: 3px; vertical-align: middle; }
td + td { color: #c8274a; }
td + .pos { color: #33a873; }
.sec td { height: 29px; padding: 9px 0 0 10px; border: 0; color: #8d8d8d; font-size: 7px; }
.sec.two td { height: 24px; padding-top: 4px; }
.sec .ic { margin-right: 6px; vertical-align: middle; }
tr.on { outline: 1px solid #a5a5a5; outline-offset: -1px; border-radius: 4px; }
.nas, .btc { background: #169aa0; color: #fff; font-size: 6px; line-height: 12px; text-align: center; }
.btc { background: #e8912a; font-size: 8px; }
.handle { position: absolute; left: -3px; bottom: 5px; width: 7px; height: 14px; background: #0a0a0a; border-radius: 2px; }
.detail { display: flex; align-items: center; gap: 5px; height: 36px; flex: none; padding: 0 4px 0 10px; border-top: 3px solid var(--line); }
.detail .coin { width: 16px; height: 16px; }
.detail .acts button { width: 26px; }

.rail { display: flex; flex-direction: column; align-items: center; width: 31px; flex: none; padding: 4px 0 0; }
.rail button { position: relative; width: 25px; height: 30px; flex: none; }
.rail .on { height: 25px; margin-bottom: 3px; border-radius: 4px; background: #3d3d3d; }
.rail .push { margin-top: auto; }
.rail span { position: absolute; top: 2px; right: -3px; padding: 0 3px; border-radius: 6px; background: var(--red); color: #fff; font-size: 8px; line-height: 11px; }
.rail .apps { height: 22px; width: 22px; margin: 5px 0 8px; border-radius: 50%; background: #f5f5f5; }
.apps svg { width: 22px; height: 22px; }
.rail hr { width: 22px; height: 1px; }
.rail .end { height: 30px; margin-top: 4px; }
```

FILE: chart.js
```js
// Each bar: direction, body top, body bottom, high, low.
const main = `u554,583,554,583 u545,555,514,556 u503,545,490,545 u468,503,468,505 u419,468,400,475 d419,420,373,459 d419,448,401,459 u373,448,369,459
u349,372,265,376 u337,349,318,378 u281,335,265,355 d281,296,262,302 u238,296,233,311 u199,240,189,272 u197,200,189,219 u162,198,141,198 u155,163,141,194
d155,176,131,176 d175,296,175,297 d294,310,260,320 d310,353,310,370 d353,416,353,423 u361,416,347,425 d361,368,332,371 u348,368,315,368 u347,351,311,352
u328,348,325,360 d328,377,325,383 d377,387,336,388 u368,389,368,395 u360,369,329,369 u313,361,305,370 d311,329,309,344 d328,339,311,346 d339,341,318,341
d340,367,315,377 u338,367,338,367 u333,339,329,340 d333,341,330,347 u322,341,312,341 u315,322,309,332 d315,317,313,344 d315,323,308,323 d319,328,319,340
d327,330,301,332 d329,340,329,357 u334,340,329,353 u315,335,303,335 d315,333,315,340 u322,333,320,335 u315,323,312,324 u299,315,297,316 u271,299,265,300
d271,289,258,290 u274,289,264,290 d273,276,273,286 u232,275,231,280 u230,233,225,238 d230,244,230,250 d244,260,240,260 d259,264,256,268 u263,264,252,265
d263,274,260,281 d274,288,270,288 d286,293,268,294 u271,292,268,293 u256,271,252,272 u253,256,250,257 d251,270,251,283 d270,272,269,272 d271,278,268,278
u267,278,266,279 d268,272,267,272 u265,272,258,272 u253,265,250,266 d252,268,250,272 d268,282,253,283 u280,283,276,284 u265,279,265,280 d266,271,265,272
u266,271,262,271 d266,269,265,272 d268,270,267,277 d267,269,262,269 u265,268,258,269 d265,268,264,269 u265,269,261,270 u245,265,244,265 d241,258,237,259
d258,271,257,271 u267,272,266,284 u264,268,248,269 d264,271,263,282 u253,272,252,280 u247,253,243,254 d247,261,241,262 d263,271,261,277 u258,272,257,276
d257,269,256,270 u259,268,258,269 u256,260,255,269 u247,256,246,257 u243,247,242,248 u238,243,234,244 u229,238,226,239 d229,247,225,247 d247,259,246,264
u246,259,246,260 u245,247,238,248 u244,246,235,257 u242,245,236,246 u228,243,225,243 u219,228,213,229 u192,220,191,226 d191,199,190,204 d199,213,197,220
u192,213,185,213 u181,194,180,196 u167,181,154,182 d168,183,167,184 d184,189,183,192 u173,189,172,198 u157,173,146,174 d156,161,151,170 d161,187,158,206
d187,214,173,215 d214,223,192,224 d221,227,220,254 u226,227,219,240 d226,233,219,241 d232,304,231,306 u269,301,256,302 u248,269,245,270 d248,251,236,255
u243,251,239,270 d243,253,242,254 u241,254,240,255 u239,242,231,243 u213,239,212,240 d213,231,212,232 u227,232,226,233 d227,233,223,240`.split(/\s+/);
const early = { '-97': 'u582,583,570,583', '-88': 'u577,583,574,583', '-87': 'u571,578,557,578', '-86': 'd571,576,565,583', '-85': 'd577,583,565,583',
  '-83': 'u579,583,565,583', '-82': 'u574,580,543,580', '-81': 'd575,577,574,578', '-80': 'd576,583,575,583', '-77': 'u582,583,579,583',
  '-76': 'u582,583,576,583', '-75': 'u573,583,568,583', '-74': 'u571,574,559,583', '-73': 'd571,583,570,583' };

const bar = (slot, code) => {
  const [top, bottom, high, low] = code.slice(1).split(',').map(Number);
  const x = Math.round(441 + slot * 3.883);
  const cls = code[0] === 'u' ? 'up' : 'dn';
  return `<rect class="${cls}" opacity=".7" x="${x}" y="${high}" width="1" height="${low - high}"/>` +
    `<rect class="${cls}" x="${x - 1}" y="${top}" width="3" height="${bottom - top}"/>`;
};
document.getElementById('candles-layer').innerHTML =
  '<path class="cross" d="M37 224.500H1069M37 233.500H1069M802.500 82V583"/><path stroke="#555" d="M794 223.500h16M801.500 216v16"/>' +
  Object.entries(early).map(([k, v]) => bar(+k, v)).join('') + main.map((v, k) => bar(k, v)).join('');

// The two hours behind the cursor's time tag stay blank.
const hours = ['20', '01:00', '02:00', '03:00', '04:00', '05:00', '06:00', '07:00', '08:00', '09:00', '10:00', '11:00', '12:00',
  '13:00', '14:00', '15:00', '', '', '19:00', '20:00', '21:00', '22:00', '23:00'];
document.getElementById('time-list').innerHTML = hours.map(h => `<span>${h}</span>`).join('');
document.getElementById('price-list').innerHTML =
  Array.from({ length: 25 }, (_, i) => `<span>2.${368 - i},00</span>`).join('');
```
